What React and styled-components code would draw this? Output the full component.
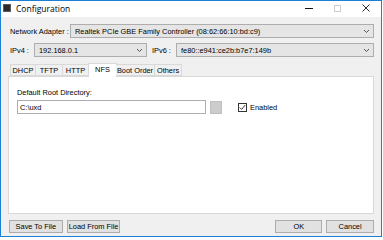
import React from "react";
import styled, { createGlobalStyle } from "styled-components";

const Global = createGlobalStyle`
  html, body { margin: 0; padding: 0; background: #ffffff; }
  body { font-family: "Liberation Sans", Arial, sans-serif; }
`;

const Window = styled.div`
  box-sizing: border-box;
  width: 382px;
  height: 237px;
  border: 1px solid #1c7fd6;
  background: #f0f0f0;
  display: flex;
  flex-direction: column;
`;

const TitleBar = styled.div`
  height: 16px;
  background: #ffffff;
  display: flex;
  align-items: center;
  padding-left: 2px;
  flex: none;
`;

const AppIcon = styled.div`
  width: 8px;
  height: 8px;
  background: #2b2b2b;
  border: 1px solid #5a5a5a;
  box-sizing: border-box;
  margin-top: -2px;
`;

const Title = styled.span`
  font-family: "Open Sans", "Liberation Sans", sans-serif;
  font-size: 8.5px;
  color: #000;
  margin-left: 5px;
  margin-top: -2px;
`;

const Controls = styled.div`
  margin-left: auto;
  display: flex;
  align-items: center;
  margin-top: -2px;
`;

const Ctrl = styled.div`
  width: ${(p) => p.$w}px;
  height: 12px;
  display: flex;
  align-items: center;
  justify-content: center;
`;

const Body = styled.div`
  flex: 1;
  display: flex;
  flex-direction: column;
  padding: 7px 7px 0 7px;
  font-size: 7.4px;
  color: #000;
`;

const Row = styled.div`
  display: flex;
  align-items: center;
  height: 14px;
  margin-bottom: 5px;
`;

const Label = styled.span`
  width: ${(p) => p.$w}px;
  padding-left: 2px;
  box-sizing: border-box;
  flex: none;
  white-space: nowrap;
`;

const Select = styled.div`
  box-sizing: border-box;
  height: 14px;
  width: ${(p) => (p.$w ? `${p.$w}px` : "auto")};
  flex: ${(p) => (p.$w ? "none" : "1")};
  background: #e5e5e5;
  border: 1px solid #adadad;
  display: flex;
  align-items: center;
  padding: 0 3px 0 4px;
  white-space: nowrap;
  overflow: hidden;
  margin-right: ${(p) => p.$mr || 0}px;
`;

const SelText = styled.span`
  flex: 1;
  overflow: hidden;
`;

const Tabs = styled.div`
  display: flex;
  align-items: flex-end;
  height: 13px;
  padding-left: 2px;
  margin-top: 1px;
  position: relative;
  z-index: 1;
`;

const Tab = styled.div`
  box-sizing: border-box;
  width: ${(p) => p.$w}px;
  height: ${(p) => (p.$active ? 14 : 12)}px;
  margin: ${(p) => (p.$active ? "0 -1px 0 -1px" : "0")};
  margin-bottom: ${(p) => (p.$active ? -1 : 0)}px;
  background: ${(p) => (p.$active ? "#ffffff" : "#f0f0f0")};
  border: 1px solid #d9d9d9;
  border-left-width: ${(p) => (p.$first || p.$active ? 1 : 0)}px;
  border-bottom: ${(p) => (p.$active ? "none" : "1px solid #d9d9d9")};
  display: flex;
  align-items: center;
  justify-content: center;
  padding-bottom: ${(p) => (p.$active ? 2 : 0)}px;
  white-space: nowrap;
  position: relative;
`;

const Panel = styled.div`
  box-sizing: border-box;
  height: 138px;
  background: #ffffff;
  border: 1px solid #d9d9d9;
  padding: 11px 0 0 8px;
  display: flex;
  flex-direction: column;
`;

const FieldLabel = styled.div`
  height: 10px;
  line-height: 10px;
  margin-bottom: 2px;
`;

const FieldRow = styled.div`
  display: flex;
  align-items: center;
`;

const TextInput = styled.div`
  box-sizing: border-box;
  width: 189px;
  height: 14px;
  border: 1px solid #abadb3;
  background: #fff;
  display: flex;
  align-items: center;
  padding-left: 2px;
`;

const Browse = styled.div`
  box-sizing: border-box;
  width: 12px;
  height: 13px;
  margin-left: 4px;
  background: #cccccc;
  border: 1px solid #bfbfbf;
`;

const Check = styled.div`
  box-sizing: border-box;
  width: 9px;
  height: 9px;
  border: 1px solid #333;
  background: #fff;
  margin-left: 16px;
  display: flex;
  align-items: center;
  justify-content: center;
`;

const CheckLabel = styled.span`
  margin-left: 3px;
`;

const Footer = styled.div`
  display: flex;
  align-items: center;
  padding: 0 0 0 1px;
  margin-top: 6px;
`;

const Button = styled.div`
  box-sizing: border-box;
  width: ${(p) => p.$w}px;
  height: 13px;
  background: #e1e1e1;
  border: 1px solid #adadad;
  display: flex;
  align-items: center;
  justify-content: center;
  margin-left: ${(p) => p.$ml || 0}px;
  white-space: nowrap;
`;

const Chevron = () => (
  <svg width="7" height="5" viewBox="0 0 7 5">
    <path d="M1 1 L3.5 3.5 L6 1" fill="none" stroke="#555" strokeWidth="1" />
  </svg>
);

export default function App() {
  return (
    <>
      <Global />
      <Window>
        <TitleBar>
          <AppIcon />
          <Title>Configuration</Title>
          <Controls>
            <Ctrl $w={28}>
              <svg width="8" height="8" viewBox="0 0 8 8">
                <path d="M0 4.5 H8" stroke="#111" strokeWidth="1" />
              </svg>
            </Ctrl>
            <Ctrl $w={28}>
              <svg width="8" height="8" viewBox="0 0 8 8">
                <rect x="1.5" y="1.5" width="6" height="6" fill="none" stroke="#ccc" strokeWidth="1" />
              </svg>
            </Ctrl>
            <Ctrl $w={30}>
              <svg width="8" height="8" viewBox="0 0 8 8">
                <path d="M0.5 0.5 L7.5 7.5 M7.5 0.5 L0.5 7.5" stroke="#111" strokeWidth="0.9" />
              </svg>
            </Ctrl>
          </Controls>
        </TitleBar>
        <Body>
          <Row>
            <Label $w={62}>Network Adapter :</Label>
            <Select>
              <SelText>Realtek PCIe GBE Family Controller (08:62:66:10:bd:c9)</SelText>
              <Chevron />
            </Select>
          </Row>
          <Row>
            <Label $w={26}>IPv4 :</Label>
            <Select $w={113} $mr={5}>
              <SelText>192.168.0.1</SelText>
              <Chevron />
            </Select>
            <Label $w={24} style={{ paddingLeft: 0 }}>IPv6 :</Label>
            <Select>
              <SelText>fe80::e941:ce2b:b7e7:149b</SelText>
              <Chevron />
            </Select>
          </Row>
          <Tabs>
            <Tab $w={26} $first>DHCP</Tab>
            <Tab $w={27}>TFTP</Tab>
            <Tab $w={26}>HTTP</Tab>
            <Tab $w={29} $active>NFS</Tab>
            <Tab $w={39}>Boot Order</Tab>
            <Tab $w={27}>Others</Tab>
          </Tabs>
          <Panel>
            <FieldLabel>Default Root Directory:</FieldLabel>
            <FieldRow>
              <TextInput>C:\uxd</TextInput>
              <Browse />
              <Check>
                <svg width="7" height="7" viewBox="0 0 7 7">
                  <path d="M0.8 3.6 L2.6 5.4 L6.2 1" fill="none" stroke="#222" strokeWidth="0.9" />
                </svg>
              </Check>
              <CheckLabel>Enabled</CheckLabel>
            </FieldRow>
          </Panel>
          <Footer>
            <Button $w={54}>Save To File</Button>
            <Button $w={54} $ml={4}>Load From File</Button>
            <Button $w={47} $ml={155}>OK</Button>
            <Button $w={48} $ml={4}>Cancel</Button>
          </Footer>
        </Body>
      </Window>
    </>
  );
}
